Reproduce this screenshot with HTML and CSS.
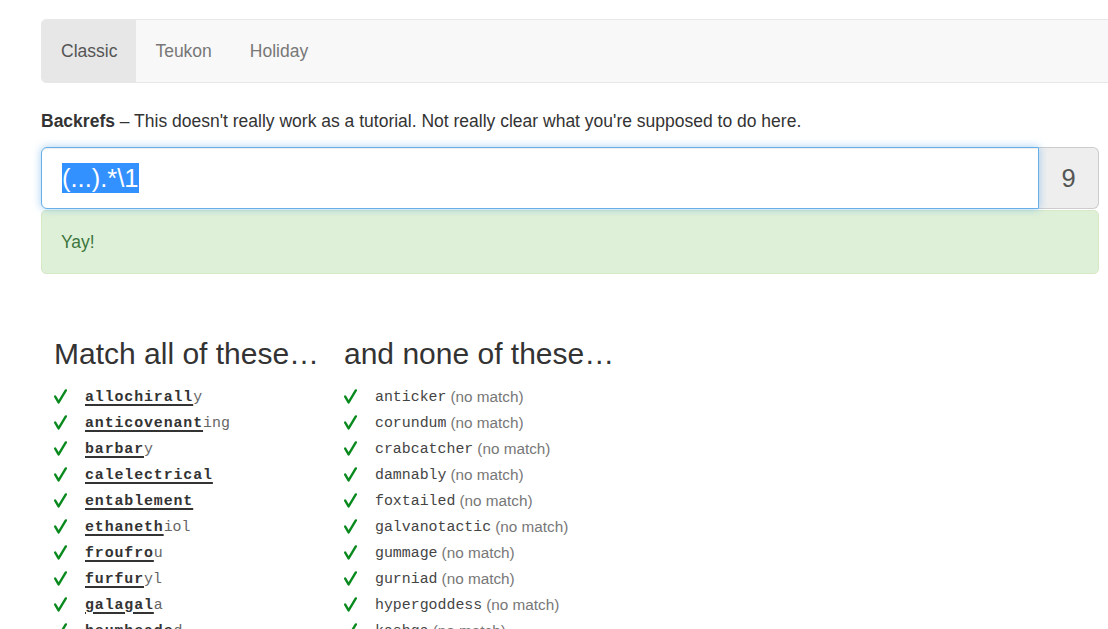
FILE: index.html
```html
<!DOCTYPE html>
<html>
<head>
<meta charset="utf-8">
<title>Regex Golf</title>
<link rel="stylesheet" href="styles.css">
</head>
<body>
<div class="container">
  <nav class="navbar">
    <a class="nav-link active">Classic</a>
    <a class="nav-link">Teukon</a>
    <a class="nav-link">Holiday</a>
  </nav>

  <p class="intro"><b>Backrefs</b> – This doesn't really work as a tutorial. Not really clear what you're supposed to do here.</p>

  <div class="input-group">
    <div class="regex-input"><span class="sel">(...).*\1</span></div>
    <div class="addon">9</div>
  </div>

  <div class="alert">Yay!</div>

  <div class="lists">
    <div class="col col-match">
      <h3>Match all of these…</h3>
      <ul>
        <li><svg class="chk" viewBox="0 0 13 15"><path d="M1.2 7.6 L4.6 13.4 L11.8 1.4"/></svg><span class="w"><u>allochirall</u>y</span></li>
        <li><svg class="chk" viewBox="0 0 13 15"><path d="M1.2 7.6 L4.6 13.4 L11.8 1.4"/></svg><span class="w"><u>anticovenant</u>ing</span></li>
        <li><svg class="chk" viewBox="0 0 13 15"><path d="M1.2 7.6 L4.6 13.4 L11.8 1.4"/></svg><span class="w"><u>barbar</u>y</span></li>
        <li><svg class="chk" viewBox="0 0 13 15"><path d="M1.2 7.6 L4.6 13.4 L11.8 1.4"/></svg><span class="w"><u>calelectrical</u></span></li>
        <li><svg class="chk" viewBox="0 0 13 15"><path d="M1.2 7.6 L4.6 13.4 L11.8 1.4"/></svg><span class="w"><u>entablement</u></span></li>
        <li><svg class="chk" viewBox="0 0 13 15"><path d="M1.2 7.6 L4.6 13.4 L11.8 1.4"/></svg><span class="w"><u>ethaneth</u>iol</span></li>
        <li><svg class="chk" viewBox="0 0 13 15"><path d="M1.2 7.6 L4.6 13.4 L11.8 1.4"/></svg><span class="w"><u>froufro</u>u</span></li>
        <li><svg class="chk" viewBox="0 0 13 15"><path d="M1.2 7.6 L4.6 13.4 L11.8 1.4"/></svg><span class="w"><u>furfur</u>yl</span></li>
        <li><svg class="chk" viewBox="0 0 13 15"><path d="M1.2 7.6 L4.6 13.4 L11.8 1.4"/></svg><span class="w"><u>galagal</u>a</span></li>
        <li><svg class="chk" viewBox="0 0 13 15"><path d="M1.2 7.6 L4.6 13.4 L11.8 1.4"/></svg><span class="w"><u>heumheade</u>d</span></li>
      </ul>
    </div>
    <div class="col col-none">
      <h3>and none of these…</h3>
      <ul>
        <li><svg class="chk" viewBox="0 0 13 15"><path d="M1.2 7.6 L4.6 13.4 L11.8 1.4"/></svg><span class="w plain">anticker</span> <span class="nm">(no match)</span></li>
        <li><svg class="chk" viewBox="0 0 13 15"><path d="M1.2 7.6 L4.6 13.4 L11.8 1.4"/></svg><span class="w plain">corundum</span> <span class="nm">(no match)</span></li>
        <li><svg class="chk" viewBox="0 0 13 15"><path d="M1.2 7.6 L4.6 13.4 L11.8 1.4"/></svg><span class="w plain">crabcatcher</span> <span class="nm">(no match)</span></li>
        <li><svg class="chk" viewBox="0 0 13 15"><path d="M1.2 7.6 L4.6 13.4 L11.8 1.4"/></svg><span class="w plain">damnably</span> <span class="nm">(no match)</span></li>
        <li><svg class="chk" viewBox="0 0 13 15"><path d="M1.2 7.6 L4.6 13.4 L11.8 1.4"/></svg><span class="w plain">foxtailed</span> <span class="nm">(no match)</span></li>
        <li><svg class="chk" viewBox="0 0 13 15"><path d="M1.2 7.6 L4.6 13.4 L11.8 1.4"/></svg><span class="w plain">galvanotactic</span> <span class="nm">(no match)</span></li>
        <li><svg class="chk" viewBox="0 0 13 15"><path d="M1.2 7.6 L4.6 13.4 L11.8 1.4"/></svg><span class="w plain">gummage</span> <span class="nm">(no match)</span></li>
        <li><svg class="chk" viewBox="0 0 13 15"><path d="M1.2 7.6 L4.6 13.4 L11.8 1.4"/></svg><span class="w plain">gurniad</span> <span class="nm">(no match)</span></li>
        <li><svg class="chk" viewBox="0 0 13 15"><path d="M1.2 7.6 L4.6 13.4 L11.8 1.4"/></svg><span class="w plain">hypergoddess</span> <span class="nm">(no match)</span></li>
        <li><svg class="chk" viewBox="0 0 13 15"><path d="M1.2 7.6 L4.6 13.4 L11.8 1.4"/></svg><span class="w plain">kashga</span> <span class="nm">(no match)</span></li>
      </ul>
    </div>
  </div>
</div>
</body>
</html>
```

FILE: styles.css
```css
html, body {
  margin: 0;
  padding: 0;
  overflow: hidden;
  background: #fff;
}

body {
  font-family: "Liberation Sans", Arial, sans-serif;
  font-size: 17.5px;
  line-height: 25px;
  color: #333;
}

.container {
  padding: 19px 0 0 41px;
  width: 1058px;
}

.navbar {
  display: flex;
  height: 62px;
  margin-right: -60px;
  background: #f8f8f8;
  border: 1px solid #e7e7e7;
  border-radius: 5px;
  margin-bottom: 25px;
  overflow: hidden;
}

.nav-link {
  display: block;
  padding: 18.5px 19px;
  color: #777;
  text-decoration: none;
  line-height: 25px;
}

.nav-link.active {
  background: #e7e7e7;
  color: #555;
}

.intro {
  margin: 0 0 13px;
  padding-top: 1px;
}

.intro b {
  font-weight: bold;
}

.input-group {
  display: flex;
  height: 62px;
}

.regex-input {
  flex: 1;
  display: flex;
  align-items: center;
  padding: 0 20px;
  border: 1px solid #66afe9;
  border-radius: 6px 0 0 6px;
  background: #fff;
  box-shadow: inset 0 1px 1px rgba(0,0,0,.075), 0 0 8px rgba(102,175,233,.6);
  font-size: 25.5px;
  position: relative;
  z-index: 1;
}

.sel {
  background: #3390ff;
  color: #fff;
  line-height: 29px;
  display: inline-block;
  padding-top: 1px;
}

.addon {
  width: 59px;
  display: flex;
  align-items: center;
  justify-content: center;
  background: #eee;
  border: 1px solid #ccc;
  border-left: none;
  border-radius: 0 6px 6px 0;
  color: #555;
  font-size: 25.5px;
}

.alert {
  margin-top: 1px;
  padding: 18.5px 19px;
  background: #dff0d8;
  border: 1px solid #d6e9c6;
  border-radius: 5px;
  color: #3c763d;
}

.lists {
  display: flex;
  padding-left: 13px;
  margin-top: 63px;
}

.col-match {
  width: 290px;
}

h3 {
  margin: 0 0 13.5px;
  font-size: 30px;
  line-height: 33px;
  font-weight: normal;
  color: #333;
}

ul {
  list-style: none;
  margin: 0;
  padding: 0;
}

li {
  display: flex;
  align-items: center;
  height: 26px;
  line-height: 26px;
  white-space: nowrap;
}

.chk {
  width: 13px;
  height: 15px;
  margin-right: 18px;
  flex: none;
}

.chk path {
  fill: none;
  stroke: #0a8a1e;
  stroke-width: 2.4;
  stroke-linecap: round;
  stroke-linejoin: round;
}

.w {
  font-family: "Liberation Mono", "Courier New", monospace;
  font-size: 14.9px;
  color: #666;
}

.w u {
  font-weight: bold;
  color: #333;
  letter-spacing: 0.9px;
  text-decoration: underline;
  text-underline-offset: 3px;
  text-decoration-thickness: 1.5px;
}

.w.plain {
  color: #444;
}

.nm {
  font-size: 15.3px;
  color: #777;
  margin-left: 4px;
}
```
